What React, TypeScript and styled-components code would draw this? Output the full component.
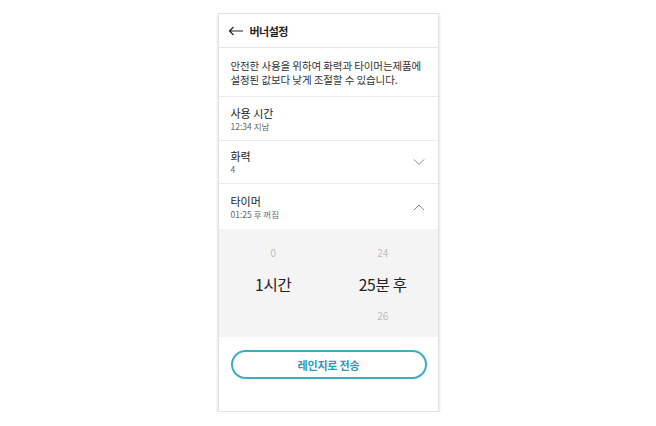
import React from 'react'
import styled, { createGlobalStyle } from 'styled-components'

const Global = createGlobalStyle`
    body {
        margin: 0;
        background: #fff;
        font-family: 'Noto Sans CJK KR', 'Noto Sans', sans-serif;
        color: #222;
    }
`

const Panel = styled.div`
    width: 221px;
    margin: 13px auto 0;
    border: 1px solid #e2e2e2;
    box-sizing: border-box;
    background: #fff;
    box-shadow: 0 2px 3px rgba(0, 0, 0, 0.18);
`

const Header = styled.header`
    height: 34px;
    display: flex;
    align-items: center;
    gap: 7px;
    padding-left: 9px;
    border-bottom: 1px solid #e6e6e6;
    box-sizing: border-box;
`

const Title = styled.h1`
    margin: 0;
    font-size: 11px;
    font-weight: 700;
    letter-spacing: -0.5px;
`

const Notice = styled.p`
    margin: 0;
    padding: 11px 10px 10px 12px;
    font-size: 10.5px;
    line-height: 13.5px;
    color: #333;
    letter-spacing: -0.1px;
    border-bottom: 1px solid #ececec;
`

const Row = styled.div<{ $h: number; $line?: boolean }>`
    height: ${(p) => p.$h}px;
    display: flex;
    align-items: center;
    justify-content: space-between;
    padding: 0 12px;
    box-sizing: border-box;
    border-bottom: ${(p) => (p.$line ? '1px solid #ececec' : 'none')};
`

const Label = styled.div`
    font-size: 11px;
    line-height: 14px;
    color: #222;
`

const Sub = styled.div`
    font-size: 8.5px;
    line-height: 12px;
    color: #666;
`

const Picker = styled.div`
    height: 108px;
    background: #f4f4f4;
    display: grid;
    grid-template-columns: 1fr 1fr;
`

const Wheel = styled.div`
    display: grid;
    grid-template-rows: 32px 31px 33px;
    padding-top: 7px;
    align-items: center;
    justify-items: center;
`

const Faint = styled.span`
    font-size: 10px;
    color: #bdbdbd;
`

const Pick = styled.span`
    font-size: 15.5px;
    color: #222;
    letter-spacing: -0.2px;
`

const Footer = styled.div`
    height: 74px;
    padding: 13px 11px 0 12px;
    box-sizing: border-box;
`

const Send = styled.button`
    width: 100%;
    height: 29px;
    border: 2px solid #3aafc2;
    border-radius: 15px;
    background: #fff;
    color: #2a9cb0;
    font-family: inherit;
    font-size: 11px;
    font-weight: 700;
    letter-spacing: -0.2px;
    padding: 0;
`

const Chevron = ({ up }: { up?: boolean }) => (
    <svg width="12" height="8" viewBox="0 0 12 8" style={{ marginRight: 1 }}>
        <path
            d={up ? 'M1 7 L6 2 L11 7' : 'M1 1.5 L6 6.5 L11 1.5'}
            fill="none"
            stroke="#888"
            strokeWidth="1"
        />
    </svg>
)

const Back = () => (
    <svg width="15" height="10" viewBox="0 0 15 10">
        <path d="M15 5 H1.5 M5.5 1 L1.5 5 L5.5 9" fill="none" stroke="#222" strokeWidth="1.2" />
    </svg>
)

export default function App() {
    return (
        <>
            <Global />
            <Panel>
                <Header>
                    <Back />
                    <Title>버너설정</Title>
                </Header>
                <Notice>
                    안전한 사용을 위하여 화력과 타이머는제품에
                    <br />
                    설정된 값보다 낮게 조절할 수 있습니다.
                </Notice>
                <Row $h={44} $line>
                    <div>
                        <Label>사용 시간</Label>
                        <Sub>12:34 지남</Sub>
                    </div>
                </Row>
                <Row $h={43} $line>
                    <div>
                        <Label>화력</Label>
                        <Sub>4</Sub>
                    </div>
                    <Chevron />
                </Row>
                <Row $h={45}>
                    <div>
                        <Label>타이머</Label>
                        <Sub>01:25 후 꺼짐</Sub>
                    </div>
                    <Chevron up />
                </Row>
                <Picker>
                    <Wheel>
                        <Faint>0</Faint>
                        <Pick>1시간</Pick>
                        <span />
                    </Wheel>
                    <Wheel>
                        <Faint>24</Faint>
                        <Pick>25분 후</Pick>
                        <Faint>26</Faint>
                    </Wheel>
                </Picker>
                <Footer>
                    <Send>레인지로 전송</Send>
                </Footer>
            </Panel>
        </>
    )
}
